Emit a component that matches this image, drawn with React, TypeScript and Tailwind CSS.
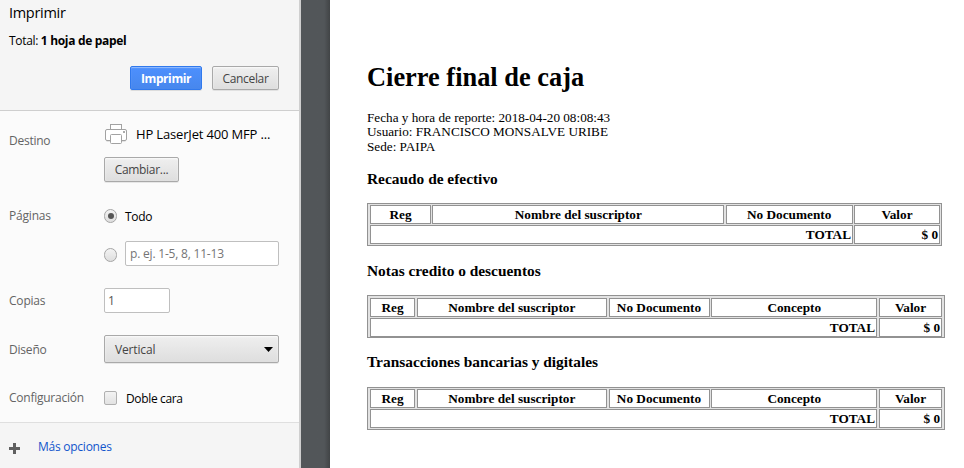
import type { ReactNode } from 'react';

const buttonFace =
  'rounded-[2px] border border-[#a9a9a9] bg-linear-to-b from-[#efefef] to-[#dedede] text-[#444] shadow-[0_1px_0_rgba(0,0,0,0.08),inset_0_1px_2px_rgba(255,255,255,0.75)]';

function Label({ children, className }: { children: ReactNode; className: string }) {
  return <div className={`w-[104px] shrink-0 pl-[9px] leading-4 text-[#646464] ${className}`}>{children}</div>;
}

function PrinterIcon() {
  return (
    <svg width="24" height="24" viewBox="0 0 24 24" fill="#fff" stroke="#a2a2a2" strokeWidth="1" className="shrink-0">
      <path d="M2.500 19.500h4M17.500 19.500h4" stroke="#e3e3e3" />
      <rect x="6.500" y="2.500" width="11" height="6" />
      <rect x="1.500" y="7.500" width="21" height="11" rx="1.500" />
      <rect x="6.500" y="12.500" width="11" height="9" rx="1" />
      <rect x="19" y="9" width="2" height="2" fill="#aaa" stroke="none" />
    </svg>
  );
}

function Cell({ children, className = '' }: { children?: ReactNode; className?: string }) {
  return (
    <div className={`border border-[#929292] bg-white text-center leading-[17px] ${className}`}>{children}</div>
  );
}

function ReportTable({ columns, template, totalTemplate, frame }: {
  columns: string[];
  template: string;
  totalTemplate: string;
  frame: string;
}) {
  return (
    <div className={`flex flex-col gap-px border border-[#929292] bg-[#e2e2e2] pl-[2px] text-[13.25px] font-bold ${frame}`}>
      <div className={`grid h-[19px] ${template}`}>
        {columns.map((c) => <Cell key={c}>{c}</Cell>)}
      </div>
      <div className={`grid h-[19px] ${totalTemplate}`}>
        <Cell className="pr-px !text-right">TOTAL</Cell>
        <Cell className="pr-px !text-right">$ 0</Cell>
      </div>
    </div>
  );
}

const detailed = ['Reg', 'Nombre del suscriptor', 'No Documento', 'Concepto', 'Valor'];

export default function App() {
  return (
    <div className="flex h-[468px] w-[964px] overflow-hidden bg-white text-black">
      <aside className="flex w-[301px] shrink-0 flex-col border-r-2 border-[#cfcfcf] bg-[#fbfbfb] font-['Open_Sans','Noto_Sans',sans-serif] text-[12px]">
        <header className="h-[111px] shrink-0 border-b border-[#cfcfcf] bg-[#f5f5f5] pl-[9px]">
          <h1 className="pt-[3px] text-[14.5px] leading-5 tracking-[-0.3px]">Imprimir</h1>
          <p className="mt-[10px] leading-4 tracking-[-0.32px]">Total: <b>1 hoja de papel</b></p>
          <div className="mt-[17px] flex gap-[10px] pl-[121px]">
            <button className="h-6 w-[72px] rounded-[2px] border border-[#3079ed] bg-linear-to-b from-[#4d90fe] to-[#4787ed] pt-px font-bold tracking-[-0.4px] text-white shadow-[0_1px_0_rgba(0,0,0,0.1),inset_0_1px_1px_rgba(255,255,255,0.4)]">Imprimir</button>
            <button className={`h-6 w-[67px] pt-px tracking-[-0.35px] ${buttonFace}`}>Cancelar</button>
          </div>
        </header>

        <section className="flex h-[311px] shrink-0 flex-col pt-[11px]">
          <div className="flex h-[60px]">
            <Label className="pt-[11px] tracking-[-0.25px]">Destino</Label>
            <div>
              <div className="flex h-[35px] items-start">
                <PrinterIcon />
                <span className="pl-2 pt-[4px] text-[13px] leading-4 tracking-[-0.16px]">HP LaserJet 400 MFP ...</span>
              </div>
              <button className={`h-[25px] w-[75px] tracking-[-0.3px] ${buttonFace}`}>Cambiar...</button>
            </div>
          </div>

          <div className="mt-[26px] flex h-[60px]">
            <Label className="tracking-[-0.2px]">Páginas</Label>
            <div>
              <div className="flex items-start pt-px">
                <span className="flex h-[14px] w-[13px] items-center justify-center rounded-full border border-[#a5a5a5] bg-linear-to-b from-[#f3f3f3] to-[#dedede]">
                  <span className="size-[6px] rounded-full bg-[#555]" />
                </span>
                <span className="pl-[8px] leading-4 tracking-[-0.3px]">Todo</span>
              </div>
              <div className="mt-4 flex items-center">
                <span className="mt-[3px] h-[14px] w-[13px] rounded-full border border-[#a5a5a5] bg-linear-to-b from-[#f3f3f3] to-[#dedede]" />
                <span className="ml-2 h-[25px] w-[154px] rounded-[2px] border border-[#bfbfbf] bg-white pl-1 leading-[23px] tracking-[-0.2px] text-[#757575]">p. ej. 1-5, 8, 11-13</span>
              </div>
            </div>
          </div>

          <div className="mt-5 flex h-[25px]">
            <Label className="pt-[5px] tracking-[-0.2px]">Copias</Label>
            <span className="w-[66px] rounded-[2px] border border-[#bfbfbf] bg-white pl-[3px] leading-[23px] text-[#555]">1</span>
          </div>

          <div className="mt-[22px] flex h-7">
            <Label className="pt-[7px] tracking-[-0.2px]">Diseño</Label>
            <div className={`flex w-[175px] items-center justify-between pl-[10px] pr-[5px] ${buttonFace}`}>
              <span className="pt-[2px] tracking-[-0.15px]">Vertical</span>
              <svg width="9" height="5" viewBox="0 0 9 5"><path d="M0 0h9L4.500 5z" fill="#000" /></svg>
            </div>
          </div>

          <div className="mt-[27px] flex">
            <Label className="tracking-[-0.25px]">Configuración</Label>
            <span className="mt-px h-[14px] w-[13px] rounded-[2px] border border-[#b0b0b0] bg-linear-to-b from-[#f3f3f3] to-[#e2e2e2]" />
            <span className="pl-[9px] pt-px leading-4 tracking-[-0.35px]">Doble cara</span>
          </div>
        </section>

        <footer className="flex flex-1 items-start border-t border-[#dfdfdf] bg-[#f5f5f5] pl-[9px] pt-4 text-[#1155cc]">
          <svg className="mt-1 w-[11px]" height="11" viewBox="0 0 11 11"><path d="M4 0h3v4h4v3H7v4H4V7H0V4h4z" fill="#606060" /></svg>
          <span className="pl-[18px] leading-4 tracking-[-0.25px]">Más opciones</span>
        </footer>
      </aside>

      <div className="w-[29px] shrink-0 bg-linear-to-r from-[#525659] from-80% to-[#414446]" />

      <main className="flex-1 pl-[37px] font-['Liberation_Serif','Times_New_Roman',serif]">
        <h1 className="pt-[62px] text-[26.4px] font-bold leading-[30px]">Cierre final de caja</h1>
        <div className="mt-[19px] text-[13.2px] leading-[14.400px]">
          <p>Fecha y hora de reporte: 2018-04-20 08:08:43</p>
          <p>Usuario: FRANCISCO MONSALVE URIBE</p>
          <p>Sede: PAIPA</p>
        </div>
        <h2 className="mt-[15.800px] text-[15.4px] font-bold leading-[18px]">Recaudo de efectivo</h2>
        <ReportTable
          columns={['Reg', 'Nombre del suscriptor', 'No Documento', 'Valor']}
          template="grid-cols-[61px_292px_127px_86px] gap-x-[1.330px]"
          totalTemplate="grid-cols-[483px_86px] gap-x-px"
          frame="mt-[15px] h-[43px] w-[575px] pt-px"
        />
        <h2 className="mt-4 text-[15.4px] font-bold leading-[18px]">Notas credito o descuentos</h2>
        <ReportTable
          columns={detailed}
          template="grid-cols-[45px_190px_101px_166px_63px] gap-x-[1.750px]"
          totalTemplate="grid-cols-[507px_63px] gap-x-[2px]"
          frame="mt-[15px] h-[43px] w-[578px] pt-[2px]"
        />
        <h2 className="mt-[15px] text-[15.4px] font-bold leading-[18px]">Transacciones bancarias y digitales</h2>
        <ReportTable
          columns={detailed}
          template="grid-cols-[45px_190px_101px_166px_63px] gap-x-[1.750px]"
          totalTemplate="grid-cols-[507px_63px] gap-x-[2px]"
          frame="mt-[16px] h-[43px] w-[578px] pt-px"
        />
      </main>
    </div>
  );
}
